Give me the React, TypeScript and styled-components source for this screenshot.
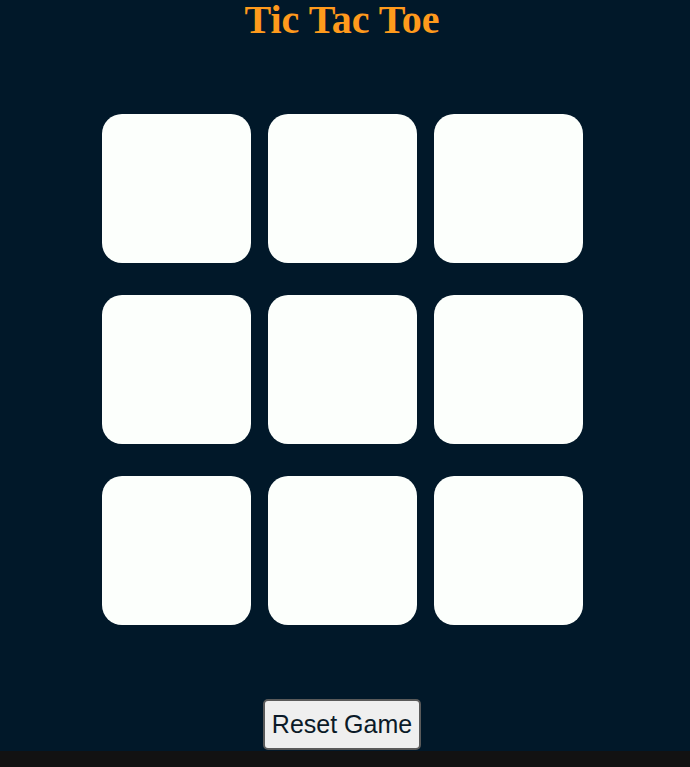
import React from "react";
import styled, { createGlobalStyle } from "styled-components";

const Global = createGlobalStyle`
  html, body { margin: 0; padding: 0; background: #121212; }
`;

const Page = styled.div`
  height: 751px;
  padding-right: 6px;
  background: #011829;
  display: flex;
  flex-direction: column;
  align-items: center;
`;

const Title = styled.h1`
  margin: -3px 0 0;
  font-family: "Liberation Serif", "Times New Roman", serif;
  font-weight: bold;
  font-size: 40px;
  line-height: 46px;
  color: #ff9a1c;
`;

const Board = styled.div`
  margin-top: 71px;
  display: grid;
  grid-template-columns: repeat(3, 149px);
  grid-auto-rows: 149px;
  column-gap: 17px;
  row-gap: 32px;
`;

const Cell = styled.button`
  border: none;
  padding: 0;
  border-radius: 20px;
  background: #fcfffc;
  cursor: pointer;
`;

const ResetButton = styled.button`
  margin-top: 74px;
  font-family: "Liberation Sans", Arial, sans-serif;
  font-size: 25px;
  padding: 10px 7px;
  background: #efefef;
  color: #0b1a28;
  border: 2px solid #5a5a5a;
  border-radius: 5px;
  height: 51px;
  box-sizing: border-box;
  line-height: 27px;
`;

export default function App() {
  return (
    <>
      <Global />
      <Page>
        <Title>Tic Tac Toe</Title>
        <Board>
          {Array.from({ length: 9 }).map((_, i) => (
            <Cell key={i} aria-label={`cell ${i + 1}`} />
          ))}
        </Board>
        <ResetButton>Reset Game</ResetButton>
      </Page>
    </>
  );
}
